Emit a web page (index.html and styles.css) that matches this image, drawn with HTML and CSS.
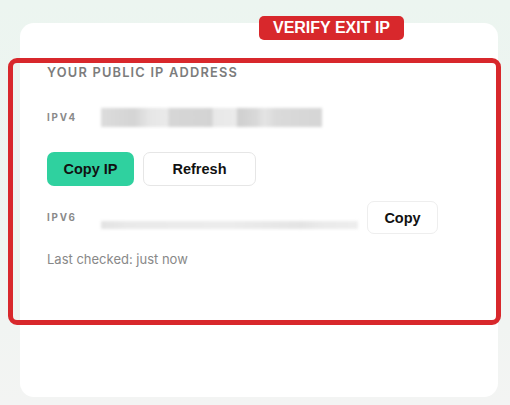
FILE: index.html
```html
<!DOCTYPE html>
<html>
<head>
<meta charset="utf-8">
<link rel="stylesheet" href="styles.css">
</head>
<body>
<div class="card">
  <div class="title">YOUR PUBLIC IP ADDRESS</div>
  <div class="row v4">
    <span class="label">IPV4</span>
    <div class="blur4"></div>
  </div>
  <div class="actions">
    <button class="btn primary">Copy IP</button>
    <button class="btn ghost refresh">Refresh</button>
  </div>
  <div class="row v6">
    <span class="label">IPV6</span>
    <div class="blur6"></div>
    <button class="btn ghost copy">Copy</button>
  </div>
  <div class="checked">Last checked: just now</div>
</div>
<div class="highlight"></div>
<div class="badge">VERIFY EXIT IP</div>
</body>
</html>
```

FILE: styles.css
```css
html, body {
  margin: 0;
  padding: 0;
}
body {
  width: 510px;
  height: 405px;
  overflow: hidden;
  background: linear-gradient(180deg, #ecf5f0 0%, #eff4f1 60%, #f3f4f3 100%);
  font-family: Inter, "Liberation Sans", sans-serif;
  position: relative;
  padding-top: 23px;
  box-sizing: border-box;
}
.card {
  margin-left: 20px;
  width: 478px;
  height: 374px;
  box-sizing: border-box;
  background: #ffffff;
  border-radius: 14px;
  padding: 42px 27px 0 27px;
  display: flex;
  flex-direction: column;
}
.title {
  font-size: 12.8px;
  font-weight: 600;
  letter-spacing: 1.2px;
  color: #7c7c7c;
  line-height: 16px;
}
.row {
  display: flex;
  align-items: center;
}
.label {
  width: 54px;
  flex: none;
  font-size: 9.8px;
  font-weight: 700;
  letter-spacing: 1.8px;
  color: #8a8a8a;
}
.v4 {
  margin-top: 27px;
  height: 19px;
}
.blur4 {
  width: 221px;
  height: 19px;
  background: linear-gradient(90deg,
    #dcdcdc 0, #d4d4d4 15%, #e6e6e6 22%, #eaeaea 30%,
    #d6d6d6 31%, #d3d3d3 50%, #e8e8e8 51%, #ebebeb 61%,
    #cfcfcf 62%, #d8d8d8 70%, #e4e4e4 74%, #dadada 79%, #d5d5d5 100%);
  filter: blur(1.5px);
}
.actions {
  display: flex;
  gap: 9px;
  margin-top: 25px;
}
.btn {
  font-family: "Liberation Sans", Arial, sans-serif;
  font-weight: 700;
  font-size: 14.5px;
  color: #111;
  border-radius: 7px;
  height: 34px;
  padding: 0;
  cursor: pointer;
}
.primary {
  width: 87px;
  background: #2fd19f;
  border: none;
}
.ghost {
  background: #fff;
  border: 1px solid #e6e6e6;
}
.refresh {
  width: 113px;
}
.v6 {
  margin-top: 15px;
  height: 33px;
}
.blur6 {
  width: 257px;
  height: 8px;
  margin-top: 14px;
  background: linear-gradient(90deg, #e2e2e2 0, #e9e9e9 10%, #ececec 50%, #e4e4e4 78%, #eaeaea 85%, #ededed 100%);
  filter: blur(1.5px);
}
.copy {
  width: 71px;
  height: 33px;
  margin-left: 9px;
  border-color: #eeeeee;
}
.checked {
  margin-top: 17px;
  font-size: 13px;
  color: #888;
  line-height: 16px;
}
.highlight {
  position: absolute;
  left: 8px;
  top: 58px;
  width: 493px;
  height: 267px;
  box-sizing: border-box;
  border: 5px solid #d8282c;
  border-radius: 9px;
  pointer-events: none;
}
.badge {
  position: absolute;
  left: 259px;
  top: 16px;
  width: 145px;
  height: 24px;
  background: #d8282c;
  border-radius: 5px;
  color: #fff;
  font-family: "Liberation Sans", Arial, sans-serif;
  font-weight: 700;
  font-size: 16px;
  line-height: 24px;
  text-align: center;
}
```
